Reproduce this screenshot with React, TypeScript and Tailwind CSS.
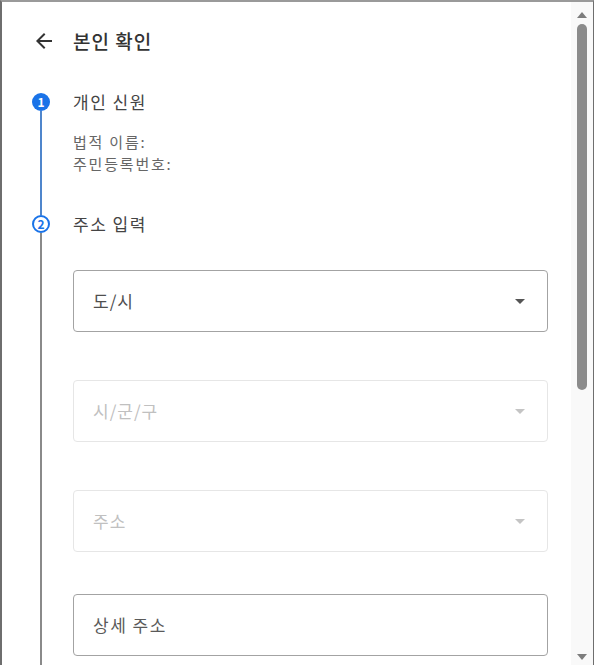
import React from 'react';

const font = { fontFamily: '"Noto Sans CJK KR", "Noto Sans", sans-serif' };

function BackArrow() {
  return (
    <svg width="24" height="24" viewBox="0 0 24 24" className="text-[#333]">
      <path
        fill="currentColor"
        d="M20 11H7.83l5.59-5.59L12 4l-8 8 8 8 1.41-1.41L7.83 13H20v-2z"
      />
    </svg>
  );
}

function Caret({ faded }: { faded?: boolean }) {
  return (
    <svg width="10" height="5" viewBox="0 0 10 5">
      <path d="M0 0h10L5 5z" fill={faded ? '#c4c4c4' : '#555'} />
    </svg>
  );
}

function SelectBox({ label, disabled }: { label: string; disabled?: boolean }) {
  return (
    <div
      className={`flex h-[62px] w-[475px] items-center justify-between rounded-[4px] border pl-[19px] pr-[22px] text-[17px] tracking-[1px] ${
        disabled ? 'border-[#e6e6e6] text-[#c0c0c0]' : 'border-[#a3a3a3] text-[#4f4f4f]'
      }`}
    >
      <span>{label}</span>
      <Caret faded={disabled} />
    </div>
  );
}

function Scrollbar() {
  return (
    <div className="flex w-[22px] flex-col items-center bg-[#f9f9f9]">
      <svg width="10" height="6" viewBox="0 0 10 6" className="mt-[10px]">
        <path d="M0 6h10L5 0z" fill="#7d7d7d" />
      </svg>
      <div className="mt-[6px] h-[366px] w-[10px] rounded-full bg-[#8b8b8b]" />
      <div className="flex-1" />
      <svg width="10" height="6" viewBox="0 0 10 6" className="mb-[5px]">
        <path d="M0 0h10L5 6z" fill="#7d7d7d" />
      </svg>
    </div>
  );
}

export default function App() {
  return (
    <div
      style={font}
      className="flex h-[665px] w-[594px] overflow-hidden border-t-2 border-l-2 border-r border-[#6e6e6e] border-t-[#9a9a9a] bg-white"
    >
      <div className="flex flex-1 flex-col pl-[30px]">
        <header className="mt-[27px] flex h-[24px] items-center">
          <BackArrow />
          <h1 className="ml-[17px] text-[19px] font-medium tracking-[1px] text-[#333]">본인 확인</h1>
        </header>

        <div className="mt-[40px] flex flex-col">
          {/* step 1 */}
          <div className="flex">
            <div className="flex w-[18px] flex-col items-center">
              <div className="flex h-[18px] w-[18px] items-center justify-center rounded-full bg-[#1a73e8] text-[12px] font-bold leading-none text-white">
                1
              </div>
              <div className="w-[2px] flex-1 bg-[#4f86cc]" />
            </div>
            <div className="ml-[23px] flex flex-col pb-[40px]">
              <div className="flex h-[18px] items-center text-[17px] tracking-[1.5px] text-[#444]">개인 신원</div>
              <div className="mt-[20px] text-[15px] leading-[22px] tracking-[1.8px] text-[#666]">
                <p>법적 이름:</p>
                <p>주민등록번호:</p>
              </div>
            </div>
          </div>

          {/* step 2 */}
          <div className="flex">
            <div className="flex w-[18px] flex-col items-center">
              <div className="flex h-[18px] w-[18px] items-center justify-center rounded-full border-2 border-[#1a73e8] text-[12px] font-bold leading-none text-[#1a73e8]">
                2
              </div>
              <div className="h-[500px] w-[2px] bg-[#8a8a8a]" />
            </div>
            <div className="ml-[23px] flex flex-col">
              <div className="flex h-[18px] items-center text-[17px] tracking-[1.5px] text-[#444]">주소 입력</div>
              <div className="mt-[37px] flex flex-col gap-[48px]">
                <SelectBox label="도/시" />
                <SelectBox label="시/군/구" disabled />
                <SelectBox label="주소" disabled />
              </div>
              <div className="mt-[42px] flex h-[62px] w-[475px] items-center rounded-[4px] border border-[#a3a3a3] pl-[19px] text-[17px] tracking-[1.5px] text-[#5a5a5a]">
                상세 주소
              </div>
            </div>
          </div>
        </div>
      </div>
      <div className="ml-[23px] flex">
        <Scrollbar />
      </div>
    </div>
  );
}
